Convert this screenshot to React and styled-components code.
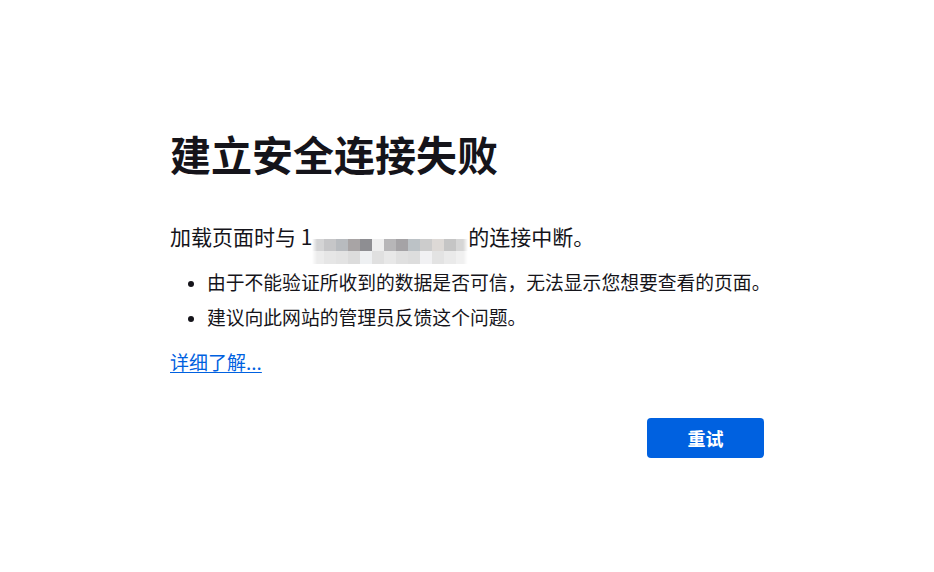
import React from "react";
import styled, { createGlobalStyle } from "styled-components";

const Global = createGlobalStyle`
  html, body { margin: 0; padding: 0; background: #ffffff; }
  body { font-family: "Noto Sans CJK SC", "Noto Sans", sans-serif; color: #15141a; }
`;

const Page = styled.div`
  display: flex;
  justify-content: flex-start;
  padding: 129px 0 0 170px;
  box-sizing: border-box;
  min-height: 572px;
`;

const Container = styled.main`
  width: 594px;
  display: flex;
  flex-direction: column;
`;

const Title = styled.h1`
  margin: 0;
  font-size: 41px;
  line-height: 49px;
  font-weight: 700;
  color: #15141a;
  letter-spacing: 0;
`;

const Intro = styled.p`
  margin: 43px 0 0;
  font-size: 21px;
  line-height: 31px;
  white-space: nowrap;
`;

const Mosaic = styled.span`
  display: inline-grid;
  grid-template-columns: repeat(13, 12px);
  grid-template-rows: 12px 13px;
  vertical-align: -6px;
  -webkit-mask-image: linear-gradient(to right, transparent 0, #000 5px, #000 calc(100% - 5px), transparent 100%);
`;

const Tile = styled.span`
  background: ${(p) => p.$c};
`;

const List = styled.ul`
  margin: 4px 0 0;
  padding: 0 0 0 37px;
  font-size: 18.8px;
  line-height: 28px;
`;

const Item = styled.li`
  margin: 0 0 7px;
  white-space: nowrap;
  &::marker { font-size: 16px; }
`;

const Link = styled.a`
  margin-top: 10px;
  align-self: flex-start;
  font-size: 19px;
  line-height: 28px;
  color: #0061e0;
  text-decoration: underline;
  text-underline-offset: 2px;
  cursor: pointer;
`;

const Actions = styled.div`
  display: flex;
  justify-content: flex-end;
  margin-top: 42px;
`;

const Button = styled.button`
  width: 117px;
  height: 40px;
  border: none;
  border-radius: 4px;
  background: #0061e0;
  color: #ffffff;
  font-family: "Noto Sans CJK SC", sans-serif;
  font-size: 18px;
  font-weight: 700;
  cursor: pointer;
`;

const top = ["#d4d4d5", "#c6c6c8", "#b8bbbf", "#a8a4a5", "#8e8e92", "#eeeeee", "#b7b6b8", "#a5a3a6", "#bcc2c6", "#cccccc", "#ddd9d6", "#c5c5c5", "#d6d6d6"];
const bottom = ["#ececec", "#e6e6e6", "#e3e3e3", "#dcdcdc", "#eef0f2", "#e0e0e0", "#e8e8e8", "#e0e0e0", "#dddddd", "#f1f1f3", "#e3e3e3", "#eaeaea", "#f0f0f0"];

export default function App() {
  return (
    <>
      <Global />
      <Page>
        <Container>
          <Title>建立安全连接失败</Title>
          <Intro>
            加载页面时与 1
            <Mosaic aria-hidden="true">
              {top.map((c, i) => (
                <Tile key={"t" + i} $c={c} />
              ))}
              {bottom.map((c, i) => (
                <Tile key={"b" + i} $c={c} />
              ))}
            </Mosaic>
            的连接中断。
          </Intro>
          <List>
            <Item>由于不能验证所收到的数据是否可信，无法显示您想要查看的页面。</Item>
            <Item>建议向此网站的管理员反馈这个问题。</Item>
          </List>
          <Link>详细了解...</Link>
          <Actions>
            <Button>重试</Button>
          </Actions>
        </Container>
      </Page>
    </>
  );
}
